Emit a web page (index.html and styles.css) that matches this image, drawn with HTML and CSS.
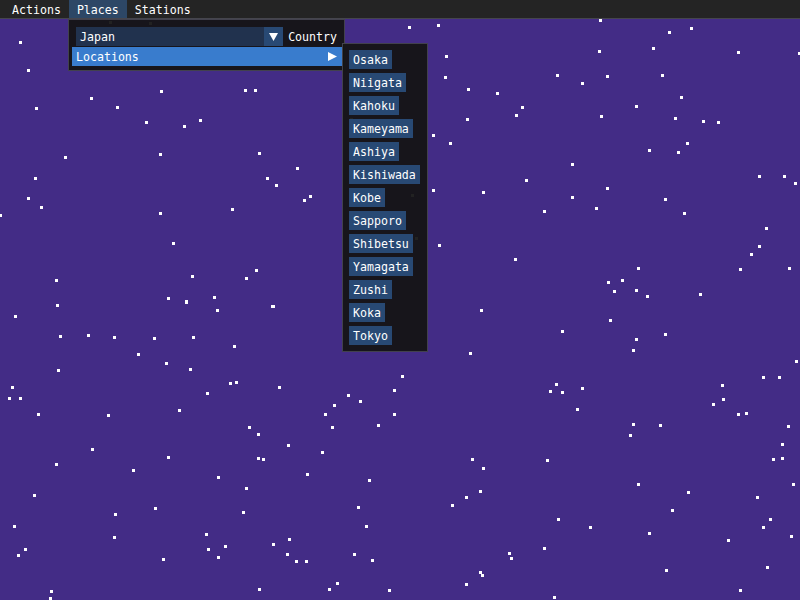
FILE: index.html
```html
<!DOCTYPE html>
<html>
<head>
<meta charset="utf-8">
<link rel="stylesheet" href="styles.css">
</head>
<body>
<div class="screen">
  <svg class="sky" width="800" height="600" viewBox="0 0 800 600">
    <g fill="#ffffff">
      <rect x="19" y="41" width="3" height="3"/><rect x="27" y="69" width="3" height="3"/><rect x="35" y="107" width="3" height="3"/>
      <rect x="90" y="97" width="3" height="3"/><rect x="116" y="106" width="3" height="3"/><rect x="145" y="121" width="3" height="3"/>
      <rect x="160" y="90" width="3" height="3"/><rect x="183" y="125" width="3" height="3"/><rect x="199" y="119" width="3" height="3"/>
      <rect x="244" y="89" width="3" height="3"/><rect x="254" y="89" width="3" height="3"/><rect x="64" y="156" width="3" height="3"/>
      <rect x="159" y="153" width="3" height="3"/><rect x="258" y="152" width="3" height="3"/><rect x="34" y="177" width="3" height="3"/>
      <rect x="266" y="177" width="3" height="3"/><rect x="296" y="167" width="3" height="3"/><rect x="275" y="184" width="3" height="3"/>
      <rect x="309" y="195" width="3" height="3"/><rect x="303" y="199" width="3" height="3"/><rect x="27" y="197" width="3" height="3"/>
      <rect x="40" y="206" width="3" height="3"/><rect x="-1" y="214" width="3" height="3"/><rect x="159" y="212" width="3" height="3"/>
      <rect x="231" y="208" width="3" height="3"/><rect x="172" y="242" width="3" height="3"/><rect x="255" y="269" width="3" height="3"/>
      <rect x="245" y="277" width="3" height="3"/><rect x="191" y="275" width="3" height="3"/><rect x="55" y="279" width="3" height="3"/>
      <rect x="213" y="296" width="3" height="3"/><rect x="167" y="297" width="3" height="3"/><rect x="185" y="301" width="3" height="3"/>
      <rect x="271" y="305" width="3" height="3"/>
      <rect x="109" y="21" width="3" height="3"/><rect x="149" y="22" width="3" height="3"/><rect x="189" y="32" width="3" height="3"/>
      <rect x="189" y="42" width="3" height="3"/><rect x="198" y="42" width="3" height="3"/><rect x="205" y="57" width="3" height="3"/>
      <rect x="350" y="118" width="3" height="3"/><rect x="411" y="194" width="3" height="3"/><rect x="377" y="212" width="3" height="3"/>
      <rect x="394" y="226" width="3" height="3"/><rect x="415" y="237" width="3" height="3"/>
      <rect x="408" y="26" width="3" height="3"/><rect x="437" y="24" width="3" height="3"/><rect x="599" y="19" width="3" height="3"/>
      <rect x="668" y="31" width="3" height="3"/><rect x="690" y="27" width="3" height="3"/><rect x="445" y="55" width="3" height="3"/>
      <rect x="598" y="50" width="3" height="3"/><rect x="652" y="47" width="3" height="3"/><rect x="737" y="51" width="3" height="3"/>
      <rect x="798" y="52" width="3" height="3"/><rect x="444" y="76" width="3" height="3"/><rect x="556" y="74" width="3" height="3"/>
      <rect x="581" y="82" width="3" height="3"/><rect x="606" y="75" width="3" height="3"/><rect x="661" y="74" width="3" height="3"/>
      <rect x="467" y="88" width="3" height="3"/><rect x="496" y="92" width="3" height="3"/><rect x="680" y="96" width="3" height="3"/>
      <rect x="521" y="106" width="3" height="3"/><rect x="515" y="114" width="3" height="3"/><rect x="466" y="118" width="3" height="3"/>
      <rect x="600" y="115" width="3" height="3"/><rect x="635" y="105" width="3" height="3"/><rect x="674" y="117" width="3" height="3"/>
      <rect x="702" y="120" width="3" height="3"/><rect x="717" y="121" width="3" height="3"/><rect x="432" y="134" width="3" height="3"/>
      <rect x="449" y="142" width="3" height="3"/><rect x="686" y="142" width="3" height="3"/><rect x="648" y="149" width="3" height="3"/>
      <rect x="677" y="151" width="3" height="3"/><rect x="571" y="163" width="3" height="3"/><rect x="758" y="175" width="3" height="3"/>
      <rect x="783" y="175" width="3" height="3"/><rect x="794" y="182" width="3" height="3"/><rect x="525" y="179" width="3" height="3"/>
      <rect x="432" y="189" width="3" height="3"/><rect x="482" y="191" width="3" height="3"/><rect x="606" y="187" width="3" height="3"/>
      <rect x="571" y="196" width="3" height="3"/><rect x="664" y="198" width="3" height="3"/><rect x="543" y="210" width="3" height="3"/>
      <rect x="595" y="207" width="3" height="3"/><rect x="683" y="212" width="3" height="3"/><rect x="765" y="227" width="3" height="3"/>
      <rect x="438" y="244" width="3" height="3"/><rect x="758" y="245" width="3" height="3"/><rect x="750" y="253" width="3" height="3"/>
      <rect x="514" y="258" width="3" height="3"/><rect x="637" y="267" width="3" height="3"/><rect x="739" y="268" width="3" height="3"/>
      <rect x="788" y="267" width="3" height="3"/><rect x="607" y="281" width="3" height="3"/><rect x="621" y="279" width="3" height="3"/>
      <rect x="613" y="290" width="3" height="3"/><rect x="635" y="289" width="3" height="3"/><rect x="646" y="295" width="3" height="3"/>
      <rect x="699" y="293" width="3" height="3"/>
      <rect x="56" y="304" width="3" height="3"/><rect x="14" y="315" width="3" height="3"/><rect x="185" y="300" width="3" height="3"/>
      <rect x="216" y="309" width="3" height="3"/><rect x="272" y="305" width="3" height="3"/><rect x="59" y="335" width="3" height="3"/>
      <rect x="87" y="334" width="3" height="3"/><rect x="113" y="336" width="3" height="3"/><rect x="153" y="337" width="3" height="3"/>
      <rect x="192" y="336" width="3" height="3"/><rect x="233" y="345" width="3" height="3"/><rect x="137" y="353" width="3" height="3"/>
      <rect x="165" y="362" width="3" height="3"/><rect x="189" y="368" width="3" height="3"/><rect x="57" y="369" width="3" height="3"/>
      <rect x="11" y="386" width="3" height="3"/><rect x="8" y="397" width="3" height="3"/><rect x="19" y="397" width="3" height="3"/>
      <rect x="229" y="382" width="3" height="3"/><rect x="235" y="381" width="3" height="3"/><rect x="278" y="386" width="3" height="3"/>
      <rect x="206" y="392" width="3" height="3"/><rect x="37" y="413" width="3" height="3"/><rect x="107" y="414" width="3" height="3"/>
      <rect x="178" y="409" width="3" height="3"/><rect x="393" y="389" width="3" height="3"/><rect x="347" y="394" width="3" height="3"/>
      <rect x="359" y="400" width="3" height="3"/><rect x="333" y="404" width="3" height="3"/><rect x="324" y="413" width="3" height="3"/>
      <rect x="393" y="413" width="3" height="3"/><rect x="248" y="426" width="3" height="3"/><rect x="257" y="433" width="3" height="3"/>
      <rect x="331" y="426" width="3" height="3"/><rect x="377" y="424" width="3" height="3"/><rect x="287" y="444" width="3" height="3"/>
      <rect x="321" y="451" width="3" height="3"/><rect x="91" y="448" width="3" height="3"/><rect x="167" y="456" width="3" height="3"/>
      <rect x="257" y="457" width="3" height="3"/><rect x="262" y="458" width="3" height="3"/><rect x="55" y="463" width="3" height="3"/>
      <rect x="132" y="469" width="3" height="3"/><rect x="306" y="473" width="3" height="3"/><rect x="217" y="476" width="3" height="3"/>
      <rect x="368" y="479" width="3" height="3"/><rect x="245" y="487" width="3" height="3"/><rect x="33" y="494" width="3" height="3"/>
      <rect x="154" y="507" width="3" height="3"/><rect x="114" y="513" width="3" height="3"/><rect x="242" y="511" width="3" height="3"/>
      <rect x="357" y="506" width="3" height="3"/><rect x="13" y="525" width="3" height="3"/><rect x="113" y="536" width="3" height="3"/>
      <rect x="365" y="525" width="3" height="3"/><rect x="205" y="533" width="3" height="3"/><rect x="288" y="538" width="3" height="3"/>
      <rect x="272" y="543" width="3" height="3"/><rect x="24" y="548" width="3" height="3"/><rect x="17" y="554" width="3" height="3"/>
      <rect x="207" y="548" width="3" height="3"/><rect x="224" y="545" width="3" height="3"/><rect x="217" y="556" width="3" height="3"/>
      <rect x="286" y="553" width="3" height="3"/><rect x="295" y="560" width="3" height="3"/><rect x="305" y="560" width="3" height="3"/>
      <rect x="162" y="558" width="3" height="3"/><rect x="353" y="553" width="3" height="3"/><rect x="371" y="559" width="3" height="3"/>
      <rect x="50" y="590" width="3" height="3"/><rect x="49" y="597" width="3" height="3"/><rect x="258" y="588" width="3" height="3"/>
      <rect x="328" y="588" width="3" height="3"/><rect x="336" y="582" width="3" height="3"/><rect x="388" y="589" width="3" height="3"/>
      <rect x="480" y="309" width="3" height="3"/><rect x="609" y="319" width="3" height="3"/><rect x="561" y="330" width="3" height="3"/>
      <rect x="635" y="338" width="3" height="3"/><rect x="664" y="333" width="3" height="3"/><rect x="632" y="349" width="3" height="3"/>
      <rect x="469" y="352" width="3" height="3"/><rect x="795" y="360" width="3" height="3"/><rect x="401" y="375" width="3" height="3"/>
      <rect x="555" y="383" width="3" height="3"/><rect x="549" y="390" width="3" height="3"/><rect x="561" y="391" width="3" height="3"/>
      <rect x="581" y="387" width="3" height="3"/><rect x="576" y="408" width="3" height="3"/><rect x="721" y="384" width="3" height="3"/>
      <rect x="722" y="398" width="3" height="3"/><rect x="712" y="403" width="3" height="3"/><rect x="737" y="413" width="3" height="3"/>
      <rect x="745" y="412" width="3" height="3"/><rect x="762" y="376" width="3" height="3"/><rect x="778" y="376" width="3" height="3"/>
      <rect x="787" y="425" width="3" height="3"/><rect x="632" y="423" width="3" height="3"/><rect x="659" y="424" width="3" height="3"/>
      <rect x="629" y="434" width="3" height="3"/><rect x="781" y="443" width="3" height="3"/><rect x="772" y="458" width="3" height="3"/>
      <rect x="781" y="457" width="3" height="3"/><rect x="471" y="458" width="3" height="3"/><rect x="482" y="467" width="3" height="3"/>
      <rect x="546" y="459" width="3" height="3"/><rect x="637" y="483" width="3" height="3"/><rect x="687" y="491" width="3" height="3"/>
      <rect x="792" y="483" width="3" height="3"/><rect x="479" y="490" width="3" height="3"/><rect x="465" y="496" width="3" height="3"/>
      <rect x="451" y="504" width="3" height="3"/><rect x="756" y="496" width="3" height="3"/><rect x="671" y="509" width="3" height="3"/>
      <rect x="557" y="518" width="3" height="3"/><rect x="589" y="526" width="3" height="3"/><rect x="648" y="532" width="3" height="3"/>
      <rect x="769" y="518" width="3" height="3"/><rect x="762" y="526" width="3" height="3"/><rect x="790" y="535" width="3" height="3"/>
      <rect x="727" y="539" width="3" height="3"/><rect x="543" y="547" width="3" height="3"/><rect x="508" y="552" width="3" height="3"/>
      <rect x="510" y="557" width="3" height="3"/><rect x="479" y="571" width="3" height="3"/><rect x="481" y="574" width="3" height="3"/>
      <rect x="465" y="583" width="3" height="3"/><rect x="553" y="596" width="3" height="3"/><rect x="665" y="569" width="3" height="3"/>
      <rect x="766" y="566" width="3" height="3"/><rect x="739" y="589" width="3" height="3"/>
    </g>
  </svg>

  <nav class="menubar">
    <span class="menu-item">Actions</span>
    <span class="menu-item open">Places</span>
    <span class="menu-item">Stations</span>
  </nav>

  <div class="popup places-popup">
    <div class="combo-row">
      <div class="combo">
        <span class="combo-value">Japan</span>
        <span class="combo-arrow">
          <svg width="9" height="8" viewBox="0 0 9 8"><polygon points="0,0 9,0 4.5,8" fill="#ffffff"/></svg>
        </span>
      </div>
      <span class="combo-label">Country</span>
    </div>
    <div class="menu-row hovered">
      <span class="row-label">Locations</span>
      <svg class="sub-arrow" width="9" height="9" viewBox="0 0 9 9"><polygon points="0,0 9,4.5 0,9" fill="#ffffff"/></svg>
    </div>
  </div>

  <div class="popup locations-popup">
    <span class="btn">Osaka</span>
    <span class="btn">Niigata</span>
    <span class="btn">Kahoku</span>
    <span class="btn">Kameyama</span>
    <span class="btn">Ashiya</span>
    <span class="btn">Kishiwada</span>
    <span class="btn">Kobe</span>
    <span class="btn">Sapporo</span>
    <span class="btn">Shibetsu</span>
    <span class="btn">Yamagata</span>
    <span class="btn">Zushi</span>
    <span class="btn">Koka</span>
    <span class="btn">Tokyo</span>
  </div>
</div>
</body>
</html>
```

FILE: styles.css
```css
* { box-sizing: border-box; }

html, body {
  margin: 0;
  padding: 0;
}

body {
  width: 800px;
  height: 600px;
  overflow: hidden;
  background: #432c86;
  font-family: "DejaVu Sans Mono", "Liberation Mono", monospace;
  font-size: 11.6px;
  line-height: 13px;
  color: #ffffff;
}

.screen {
  position: relative;
  width: 800px;
  height: 600px;
}

.sky {
  position: absolute;
  left: 0;
  top: 0;
  display: block;
}

.menubar {
  position: relative;
  display: flex;
  height: 19px;
  padding-left: 4px;
  background: #242424;
  border-bottom: 1px solid #45454d;
}

.menu-item {
  padding: 4px 8px 1px;
  height: 18px;
  white-space: pre;
}

.menu-item.open {
  background: #2d4766;
}

.popup {
  position: absolute;
  background: rgba(20, 20, 20, 0.94);
  border: 1px solid rgba(110, 110, 128, 0.5);
}

.places-popup {
  left: 68px;
  top: 19px;
  width: 277px;
  padding: 7px 7px 4px 7px;
  display: flex;
  flex-direction: column;
}

.combo-row {
  display: flex;
  align-items: flex-start;
}

.combo {
  display: flex;
  width: 208px;
  height: 19px;
  background: #21324e;
}

.combo-value {
  flex: 1;
  padding: 4px 4px 2px;
}

.combo-arrow {
  width: 19px;
  height: 19px;
  background: #284974;
  display: flex;
  align-items: center;
  justify-content: center;
  padding-top: 1px;
}

.combo-label {
  margin-left: 5px;
  padding-top: 4px;
}

.menu-row {
  display: flex;
  align-items: center;
  justify-content: space-between;
  height: 19px;
  margin: 1px -5px 0 -4px;
  padding: 0 5px 0 4px;
}

.row-label {
  padding-top: 2px;
}

.menu-row.hovered {
  background: #397ccd;
}

.sub-arrow {
  display: block;
}

.locations-popup {
  left: 342px;
  top: 43px;
  width: 86px;
  padding: 6px;
  display: flex;
  flex-direction: column;
  align-items: flex-start;
  gap: 4px;
}

.btn {
  display: block;
  height: 19px;
  padding: 4px 4px 2px;
  background: #284974;
  white-space: pre;
}
```
